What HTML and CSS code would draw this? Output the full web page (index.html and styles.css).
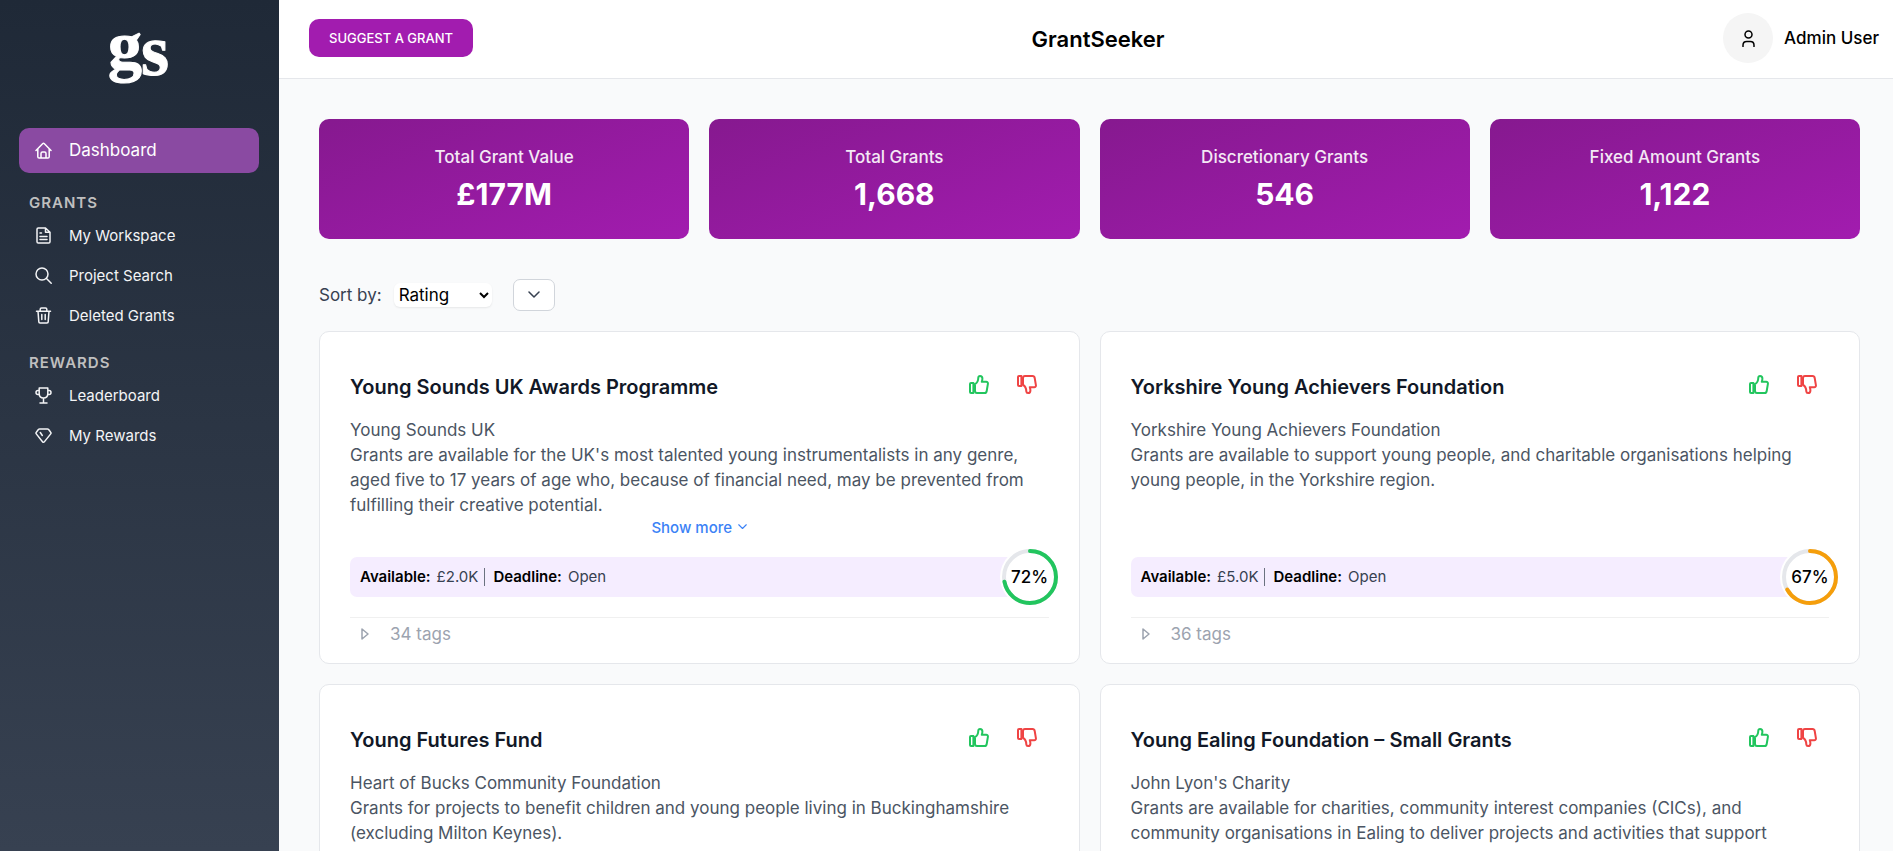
FILE: index.html
```html
<!DOCTYPE html>
<html lang="en">
<head>
    <meta charset="utf-8">
    <meta name="viewport" content="width=device-width, initial-scale=1">
    <title>GrantSeeker</title>
    <link rel="stylesheet" href="styles.css">
</head>
<body>
    <!-- shared icons -->
    <svg class="icon-defs" aria-hidden="true">
        <symbol id="thumb" viewBox="0 0 20 19">
            <path d="M2 8h2.400v10H2c-.7 0-1-.3-1-1V9c0-.7.3-1 1-1z"/>
            <path d="M6 9C8.400 7.900 9.200 6 9.300 2.700 9.400 1.500 10.100 1 11 1c1.600 0 2.400 1 2.400 2.600 0 1.300-.3 2.200-.6 3.200h4.400c1.200 0 1.900.8 1.700 2l-1.200 7.200c-.2 1.200-1 2-2.200 2H8c-1.200 0-2-.8-2-2z"/>
        </symbol>
        <symbol id="chevron" viewBox="0 0 12 8">
            <path d="M1 1l5 5 5-5"/>
        </symbol>
        <symbol id="caret" viewBox="0 0 8 12">
            <path d="M1 1v10L7 6z"/>
        </symbol>
    </svg>

    <div class="app">
        <aside class="sidebar">
            <a href="#" class="logo" aria-label="GrantSeeker home">
                <svg width="72" height="100" viewBox="0 0 72 100">
                    <text class="logo-g" x="5" y="61">g</text>
                    <text class="logo-s" x="38" y="67">s</text>
                </svg>
            </a>
            <nav class="menu">
                <a href="#" class="menu-item active">
                    <svg class="icon" viewBox="0 0 17 17"><path d="M1 8.500L7.600 1.700c.5-.5 1.300-.5 1.800 0L16 8.500M2.800 7v7.700c0 .8.500 1.300 1.300 1.300h8.800c.8 0 1.300-.5 1.300-1.300V7M6 16v-4.500c0-.9.600-1.500 1.500-1.500h2c.9 0 1.500.6 1.500 1.500V16"/></svg>
                    Dashboard
                </a>
                <h2 class="menu-title">GRANTS</h2>
                <a href="#" class="menu-item">
                    <svg class="icon" viewBox="0 0 17 17"><path d="M10.500 1H3.300C2.500 1 2 1.500 2 2.300v12.400c0 .8.500 1.300 1.300 1.300h10.400c.8 0 1.300-.5 1.300-1.300V5.300zM10.500 1v4.300H15M5 6h1.500M5 9.500h7M5 12.500h7"/></svg>
                    My Workspace
                </a>
                <a href="#" class="menu-item">
                    <svg class="icon" viewBox="0 0 17 17"><circle cx="7" cy="7" r="6"/><path d="M11.500 11.500l4.700 4.700"/></svg>
                    Project Search
                </a>
                <a href="#" class="menu-item">
                    <svg class="icon" viewBox="0 0 17 17"><path d="M1.500 4.200h14M5.200 4.200V2.300c0-.8.500-1.300 1.300-1.300h4c.8 0 1.300.5 1.300 1.300v1.900M3 4.200l.8 10.600c0 .7.600 1.200 1.300 1.200h6.800c.7 0 1.300-.5 1.300-1.200L14 4.200M6.800 7.500v5M10.200 7.500v5"/></svg>
                    Deleted Grants
                </a>
                <h2 class="menu-title">REWARDS</h2>
                <a href="#" class="menu-item">
                    <svg class="icon" viewBox="0 0 17 17"><path d="M4.200 1h8.600v5.500c0 2.700-1.800 4.500-4.300 4.500S4.200 9.200 4.200 6.500zM8.500 11v5M5 16h7M4.200 7.500H3c-1.200 0-2-.8-2-2s.8-2 2-2h1.200M12.800 7.500H14c1.200 0 2-.8 2-2s-.8-2-2-2h-1.200"/></svg>
                    Leaderboard
                </a>
                <a href="#" class="menu-item">
                    <svg class="icon" viewBox="0 0 17 17"><path d="M4.500 2h8c.5 0 .8.200 1.100.5l2.100 2.800c.4.500.4 1.100 0 1.600l-6.400 8c-.5.6-1.100.6-1.600 0l-6.400-8c-.4-.5-.4-1.100 0-1.600l2.100-2.800c.3-.3.600-.5 1.100-.5zM5.300 5.500l2 3"/></svg>
                    My Rewards
                </a>
            </nav>
        </aside>

        <div class="page">
            <header class="topbar">
                <button type="button" class="suggest">SUGGEST A GRANT</button>
                <h1>GrantSeeker</h1>
                <div class="user">
                    <span class="avatar">
                        <svg class="icon" viewBox="0 0 17 17"><circle cx="8.500" cy="4.500" r="3.500"/><path d="M3 16.500v-1.300c0-2.300 1.500-3.700 3.700-3.700h3.600c2.200 0 3.700 1.400 3.700 3.700v1.300"/></svg>
                    </span>
                    <span>Admin User</span>
                </div>
            </header>

            <main class="content">
                <section class="stats">
                    <div class="stat"><p>Total Grant Value</p><strong>£177M</strong></div>
                    <div class="stat"><p>Total Grants</p><strong>1,668</strong></div>
                    <div class="stat"><p>Discretionary Grants</p><strong>546</strong></div>
                    <div class="stat"><p>Fixed Amount Grants</p><strong>1,122</strong></div>
                </section>

                <div class="sort">
                    <label for="sortBy">Sort by:</label>
                    <select id="sortBy">
                        <option>Rating</option>
                        <option>Amount</option>
                        <option>Deadline</option>
                    </select>
                    <button type="button" class="sort-dir" aria-label="Sort direction">
                        <svg width="12" height="8"><use href="#chevron"/></svg>
                    </button>
                </div>

                <section class="grants">
                    <article class="grant">
                        <div class="grant-head">
                            <h3>Young Sounds UK Awards Programme</h3>
                            <button type="button" class="vote up" aria-label="Like"><svg width="20" height="19"><use href="#thumb"/></svg></button>
                            <button type="button" class="vote down" aria-label="Dislike"><svg width="20" height="19"><use href="#thumb"/></svg></button>
                        </div>
                        <p>Young Sounds UK</p>
                        <p>Grants are available for the UK's most talented young instrumentalists in any genre, aged five to 17 years of age who, because of financial need, may be prevented from fulfilling their creative potential.</p>
                        <button type="button" class="more">Show more <svg width="9" height="6"><use href="#chevron"/></svg></button>
                        <div class="facts">
                            <b>Available:</b> <span>£2.0K</span>
                            <b class="deadline">Deadline:</b> <span>Open</span>
                            <div class="score good">
                                <svg width="56" height="56" viewBox="0 0 56 56">
                                    <circle class="track" cx="28" cy="28" r="26"/>
                                    <circle class="value" cx="28" cy="28" r="26" pathLength="100" stroke-dasharray="72 100"/>
                                </svg>
                                <span>72%</span>
                            </div>
                        </div>
                        <button type="button" class="tags"><svg width="8" height="12"><use href="#caret"/></svg>34 tags</button>
                    </article>

                    <article class="grant">
                        <div class="grant-head">
                            <h3>Yorkshire Young Achievers Foundation</h3>
                            <button type="button" class="vote up" aria-label="Like"><svg width="20" height="19"><use href="#thumb"/></svg></button>
                            <button type="button" class="vote down" aria-label="Dislike"><svg width="20" height="19"><use href="#thumb"/></svg></button>
                        </div>
                        <p>Yorkshire Young Achievers Foundation</p>
                        <p>Grants are available to support young people, and charitable organisations helping young people, in the Yorkshire region.</p>
                        <div class="facts">
                            <b>Available:</b> <span>£5.0K</span>
                            <b class="deadline">Deadline:</b> <span>Open</span>
                            <div class="score fair">
                                <svg width="56" height="56" viewBox="0 0 56 56">
                                    <circle class="track" cx="28" cy="28" r="26"/>
                                    <circle class="value" cx="28" cy="28" r="26" pathLength="100" stroke-dasharray="67 100"/>
                                </svg>
                                <span>67%</span>
                            </div>
                        </div>
                        <button type="button" class="tags"><svg width="8" height="12"><use href="#caret"/></svg>36 tags</button>
                    </article>

                    <article class="grant">
                        <div class="grant-head">
                            <h3>Young Futures Fund</h3>
                            <button type="button" class="vote up" aria-label="Like"><svg width="20" height="19"><use href="#thumb"/></svg></button>
                            <button type="button" class="vote down" aria-label="Dislike"><svg width="20" height="19"><use href="#thumb"/></svg></button>
                        </div>
                        <p>Heart of Bucks Community Foundation</p>
                        <p>Grants for projects to benefit children and young people living in Buckinghamshire (excluding Milton Keynes).</p>
                    </article>

                    <article class="grant">
                        <div class="grant-head">
                            <h3>Young Ealing Foundation – Small Grants</h3>
                            <button type="button" class="vote up" aria-label="Like"><svg width="20" height="19"><use href="#thumb"/></svg></button>
                            <button type="button" class="vote down" aria-label="Dislike"><svg width="20" height="19"><use href="#thumb"/></svg></button>
                        </div>
                        <p>John Lyon's Charity</p>
                        <p>Grants are available for charities, community interest companies (CICs), and community organisations in Ealing to deliver projects and activities that support</p>
                    </article>
                </section>
            </main>
        </div>
    </div>
</body>
</html>
```
FILE: styles.css
```css
* {
    box-sizing: border-box;
}

body {
    margin: 0;
    font-family: Inter, sans-serif;
    font-size: 17px;
    line-height: 25px;
    color: #000;
    background: #f9fafb;
}

h1, h2, h3, p {
    margin: 0;
}

button, select {
    font-family: inherit;
    cursor: pointer;
}

a {
    color: inherit;
    text-decoration: none;
}

svg {
    fill: none;
    stroke: currentColor;
    stroke-width: 1.5;
    stroke-linecap: round;
    stroke-linejoin: round;
}

.icon {
    width: 17px;
    height: 17px;
    flex: none;
}

.icon-defs {
    display: none;
}

.app {
    display: flex;
    height: 100vh;
    overflow: hidden;
}

/* sidebar */
.sidebar {
    width: 279px;
    flex: none;
    padding: 8px 20px 0 19px;
    color: #fff;
    background: linear-gradient(#1f2937, #374151);
}

.logo {
    display: flex;
    justify-content: center;
    height: 120px;
}

.logo text {
    font-family: "Liberation Serif", serif;
    font-weight: bold;
    fill: #fff;
    stroke: #fff;
    stroke-width: 1;
}

.logo-g {
    font-size: 68px;
}

.logo-s {
    font-size: 72px;
}

.menu {
    display: flex;
    flex-direction: column;
}

.menu-item {
    display: flex;
    align-items: center;
    gap: 17px;
    height: 40px;
    padding: 0 16px;
    border-radius: 10px;
    font-size: 15px;
    color: #f3f4f6;
}

.menu-item.active {
    height: 45px;
    margin-bottom: 2px;
    font-size: 17px;
    color: #fff;
    background: #8a4aa2;
}

.menu-title {
    margin-top: 15px;
    padding: 0 10px;
    font-size: 15px;
    font-weight: 600;
    letter-spacing: 1px;
    color: #bfbfbf;
}

/* top bar */
.page {
    flex: 1;
    min-width: 0;
    display: flex;
    flex-direction: column;
}

.topbar {
    display: flex;
    justify-content: space-between;
    flex: none;
    height: 79px;
    padding: 13px 14px 0 30px;
    background: #fff;
    border-bottom: 1px solid #e5e7eb;
}

.topbar h1 {
    font-size: 22px;
    font-weight: 600;
    line-height: 52px;
}

.suggest {
    height: 38px;
    margin-top: 6px;
    padding: 0 20px;
    border: none;
    border-radius: 10px;
    font-size: 13px;
    font-weight: 500;
    color: #fff;
    background: #a21caf;
}

.user {
    display: flex;
    align-items: center;
    gap: 11px;
    height: 50px;
    font-weight: 500;
}

.avatar {
    display: grid;
    place-items: center;
    width: 50px;
    height: 50px;
    border-radius: 50%;
    background: #f5f5f5;
}

/* content */
.content {
    padding: 40px 33px 40px 40px;
}

.stats {
    display: grid;
    grid-template-columns: repeat(4, 1fr);
    gap: 20px;
}

.stat {
    height: 120px;
    padding-top: 26px;
    border-radius: 10px;
    text-align: center;
    color: #fff;
    background: linear-gradient(160deg, #86198f, #a21caf);
}

.stat p {
    font-weight: 500;
    opacity: 0.9;
}

.stat strong {
    display: block;
    font-size: 30px;
    font-weight: 700;
    line-height: 48px;
}

.sort {
    display: flex;
    align-items: center;
    height: 32px;
    margin: 40px 0 20px;
    color: #374151;
}

.sort select {
    width: 98px;
    height: 24px;
    margin: 0 21px 0 12px;
    padding: 0 1px;
    border: none;
    border-radius: 6px;
    font-size: 17px;
    color: #000;
    background: #fff;
    box-shadow: 0 1px 2px rgba(0, 0, 0, 0.08);
}

.sort-dir {
    display: grid;
    place-items: center;
    width: 42px;
    height: 32px;
    padding: 0;
    border: 1px solid #d1d5db;
    border-radius: 7px;
    color: #374151;
    background: #fff;
}

.grants {
    display: grid;
    grid-template-columns: 1fr 1fr;
    gap: 20px;
}

.grant {
    display: flex;
    flex-direction: column;
    min-height: 333px;
    padding: 30px 30px 16px;
    border: 1px solid #e5e7eb;
    border-radius: 10px;
    color: #4b5563;
    background: #fff;
}

.grant p {
    padding-right: 12px;
}

.grant-head {
    display: flex;
    gap: 4px;
    height: 56px;
}

.grant-head h3 {
    flex: 1;
    font-size: 20px;
    font-weight: 600;
    line-height: 50px;
    color: #111827;
}

.vote {
    display: grid;
    place-items: center;
    width: 44px;
    height: 44px;
    padding: 0;
    border: none;
    background: none;
}

.vote svg {
    stroke-width: 2;
}

.up {
    color: #22c55e;
}

.down {
    color: #ef4444;
}

.down svg {
    transform: scaleY(-1);
}

.more {
    display: flex;
    align-items: center;
    align-self: center;
    gap: 6px;
    height: 18px;
    padding: 0;
    border: none;
    font-size: 15px;
    font-weight: 500;
    color: #3b82f6;
    background: none;
}

.facts {
    position: relative;
    display: flex;
    align-items: center;
    gap: 6px;
    height: 40px;
    margin-top: auto;
    padding: 0 10px;
    border-radius: 7px;
    font-size: 15px;
    line-height: 18px;
    color: #374151;
    background: #f5edff;
}

.facts b {
    font-weight: 600;
    color: #000;
}

.facts .deadline {
    padding-left: 8px;
    border-left: 1px solid #6b7280;
}

.score {
    position: absolute;
    top: -8px;
    right: -9px;
    display: grid;
    place-items: center;
    width: 56px;
    height: 56px;
    border-radius: 50%;
    font-size: 17px;
    font-weight: 500;
    color: #000;
    background: #fff;
    box-shadow: 0 0 0 2px #fff;
}

.score svg,
.score span {
    grid-area: 1 / 1;
}

.score svg {
    transform: rotate(-90deg);
    stroke-width: 4;
}

.track {
    stroke: #e5e7eb;
}

.good .value {
    stroke: #22c55e;
}

.fair .value {
    stroke: #f59e0b;
}

.tags {
    display: flex;
    align-items: center;
    gap: 21px;
    height: 30px;
    margin-top: 20px;
    padding: 2px 11px 0;
    border: none;
    border-top: 1px solid #f0f0f0;
    font-size: 17px;
    color: #9ca3af;
    background: none;
}
```
